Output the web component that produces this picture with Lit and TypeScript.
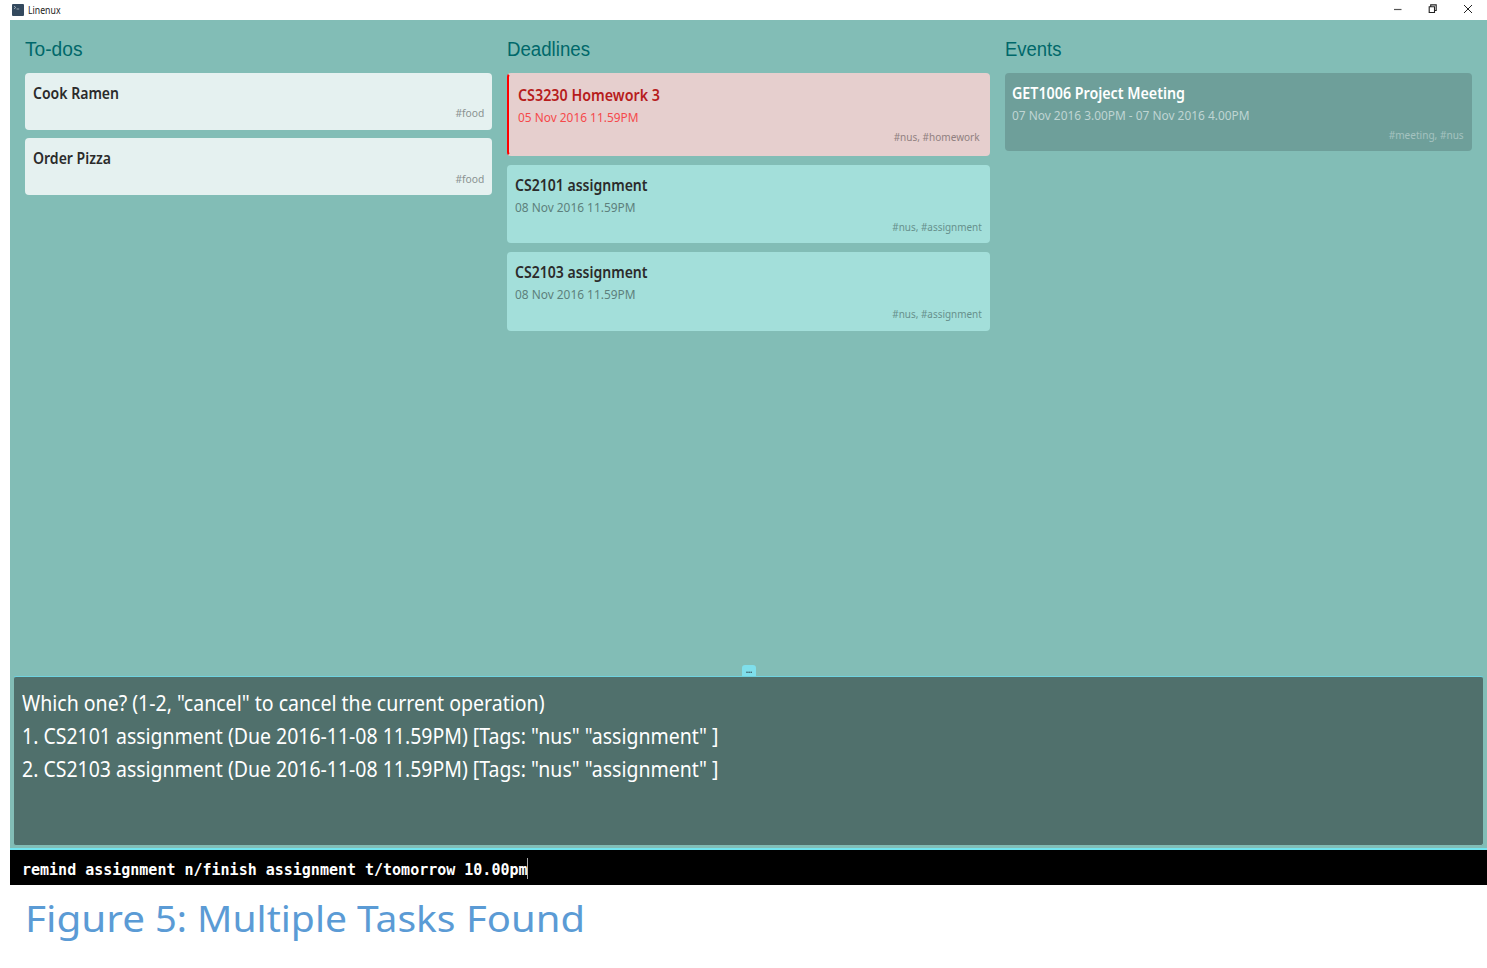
import { LitElement, html, css, nothing } from "lit";
import { customElement, property } from "lit/decorators.js";

/** One line of text condensed or expanded horizontally to a given advance width. */
@customElement("fit-text")
class FitText extends LitElement {
  @property() text = "";
  @property({ type: Number }) width = 0;
  @property({ reflect: true }) align = "left";

  static styles = css`
    :host { display: block; white-space: pre; }
    :host([align="right"]) { text-align: right; }
    .line { display: inline-block; vertical-align: top; transform-origin: 0 50%; }
    :host([align="right"]) .line { transform-origin: 100% 50%; }
  `;

  updated() {
    const line = this.renderRoot.querySelector(".line") as HTMLElement;
    const natural = parseFloat(getComputedStyle(line).width);
    if (natural) line.style.transform = `scaleX(${this.width / natural})`;
  }

  render() {
    return html`<span class="line">${this.text}</span>`;
  }
}

type Line = [text: string, width: number];
interface Task { title: Line; time?: Line; tags: Line; }

@customElement("task-card")
class TaskCard extends LitElement {
  @property({ attribute: false }) task!: Task;

  static styles = css`
    :host {
      display: block;
      box-sizing: border-box;
      padding: 9.2px 8px 8.3px 7.5px;
      border-radius: 4px;
      background: #e5f1f0;
      color: #2b2b2b;
    }
    :host(.overdue) {
      border: 2px solid transparent;
      border-left-color: #ff0000;
      padding: 9.3px 8.3px 9px 8.3px;
      background: #e6cfce;
      color: #b71c1c;
    }
    :host(.deadline) { background: #a3dfda; }
    :host(.event) { background: #6e9f9a; color: #fff; }
    .title { font-size: 15.5px; font-weight: 600; line-height: 22px; }
    .time { font-size: 13.2px; line-height: 21px; margin-top: 1px; color: #5d7f7c; }
    .tags { font-size: 11.5px; line-height: 17px; color: #8a9190; }
    :host(.overdue) .time { color: #f5494b; }
    :host(.overdue) .tags { color: #907f80; }
    :host(.deadline) .tags { color: #66908c; }
    :host(.event) .time { color: #bfd5d3; }
    :host(.event) .tags { color: #a5c3c0; }
    .title + .tags { margin-top: 0.7px; }
    .time + .tags { margin-top: 0.3px; }
  `;

  render() {
    const { title, time, tags } = this.task;
    return html`
      <fit-text class="title" .text=${title[0]} .width=${title[1]}></fit-text>
      ${time ? html`<fit-text class="time" .text=${time[0]} .width=${time[1]}></fit-text>` : nothing}
      <fit-text class="tags" align="right" .text=${tags[0]} .width=${tags[1]}></fit-text>
    `;
  }
}

interface Column { heading: Line; cards: { kind: string; task: Task }[]; }

const columns: Column[] = [
  {
    heading: ["To-dos", 57.5],
    cards: [
      { kind: "todo", task: { title: ["Cook Ramen", 86], tags: ["#food", 29] } },
      { kind: "todo", task: { title: ["Order Pizza", 78], tags: ["#food", 29] } },
    ],
  },
  {
    heading: ["Deadlines", 83],
    cards: [
      { kind: "overdue", task: { title: ["CS3230 Homework 3", 142], time: ["05 Nov 2016 11.59PM", 120.5], tags: ["#nus, #homework", 86] } },
      { kind: "deadline", task: { title: ["CS2101 assignment", 132.5], time: ["08 Nov 2016 11.59PM", 120.5], tags: ["#nus, #assignment", 89.5] } },
      { kind: "deadline", task: { title: ["CS2103 assignment", 132.5], time: ["08 Nov 2016 11.59PM", 120.5], tags: ["#nus, #assignment", 89.5] } },
    ],
  },
  {
    heading: ["Events", 56.5],
    cards: [
      { kind: "event", task: { title: ["GET1006 Project Meeting", 173], time: ["07 Nov 2016 3.00PM - 07 Nov 2016 4.00PM", 237.5], tags: ["#meeting, #nus", 75] } },
    ],
  },
];

const messages: Line[] = [
  ['Which one? (1-2, "cancel" to cancel the current operation)', 522.5],
  ['1. CS2101 assignment (Due 2016-11-08 11.59PM) [Tags: "nus" "assignment" ]', 696.5],
  ['2. CS2103 assignment (Due 2016-11-08 11.59PM) [Tags: "nus" "assignment" ]', 696.5],
];

const caption: Line[] = [["Figure", 120], ["5:", 32], ["Multiple", 150], ["Tasks", 98.5], ["Found", 119]];

@customElement("app-root")
class AppRoot extends LitElement {
  static styles = css`
    :host {
      display: block;
      box-sizing: border-box;
      height: 968px;
      padding-left: 10px;
      overflow: hidden;
      background: #fff;
      font-family: "Noto Sans", "Open Sans", sans-serif;
    }
    .titlebar { display: flex; height: 19.5px; padding-left: 2px; }
    .logo { margin-top: 3.5px; flex: none; }
    .name { flex: 1; margin-left: 3.5px; font-size: 10px; line-height: 20px; color: #222; }
    .controls { flex: none; margin-right: 14px; }
    .board {
      display: grid;
      grid-template-columns: 467px 482.5px 467px;
      column-gap: 15px;
      box-sizing: border-box;
      height: 645.5px;
      padding: 16px 0 0 15.3px;
      background: #82bdb6;
    }
    .column { display: flex; flex-direction: column; gap: 8.5px; }
    .heading {
      height: 28.5px;
      font-family: "Liberation Sans", sans-serif;
      font-size: 20px;
      line-height: 26px;
      color: #00686a;
    }
    .console { display: flex; flex-direction: column; align-items: stretch; height: 182.5px; background: #82bdb6; }
    .handle { align-self: center; width: 14px; height: 11px; border-radius: 3px 3px 0 0; background: #7fdfeb; display: block; }
    .output {
      box-sizing: border-box;
      height: 169.5px;
      margin: 0 3px 0 3px;
      padding: 8.8px 7.8px;
      border: 1px solid #82bdb6;
      border-top: 1.5px solid #6fd3e0;
      border-radius: 3px;
      background: #50706c;
      color: #fff;
      font-size: 21.8px;
      line-height: 33.3px;
    }
    .prompt {
      display: flex;
      align-items: center;
      box-sizing: border-box;
      height: 37.5px;
      border-top: 2.5px solid #72e4ee;
      padding: 3px 11.8px 0;
      background: #000;
      color: #fff;
      font-family: "DejaVu Sans Mono", monospace;
      font-size: 15px;
      font-weight: bold;
      line-height: 23px;
    }
    .command { width: 505px; padding-top: 3px; }
    .caret { width: 1px; height: 21px; background: #aaa; }
    .caption {
      display: flex;
      margin: 4.5px 0 0 15px;
      color: #5b9bd5;
      font-size: 36.5px;
      line-height: 56px;
    }
    .word { flex: none; margin-right: 10px; }
  `;

  render() {
    return html`
      <header class="titlebar">
        <svg class="logo" width="12" height="12" viewBox="0 0 12 12">
          <rect width="12" height="12" rx="1" fill="#34495e" />
          <path d="M2 2.2l1.8 1.3L2 4.8M4.6 5h2.6" fill="none" stroke="#b4c0cb" stroke-width=".8" />
        </svg>
        <fit-text class="name" .text=${"Linenux"} .width=${32.5}></fit-text>
        <svg class="controls" width="80" height="19" viewBox="1393 0 80 19" fill="none" stroke="#222">
          <path d="M1394 9.5h7.5" stroke="#555" stroke-width="1.2" />
          <path d="M1429.2 6.8h5.3v5.7h-5.3zM1430.7 6.5v-1.6h5.5v5.6h-1.6" stroke-width="1.1" />
          <path d="M1464 5l8 8M1472 5l-8 8" stroke-width="1" />
        </svg>
      </header>
      <main class="board">
        ${columns.map(({ heading, cards }) => html`
          <section class="column">
            <fit-text class="heading" .text=${heading[0]} .width=${heading[1]}></fit-text>
            ${cards.map(({ kind, task }) => html`<task-card class=${kind} .task=${task}></task-card>`)}
          </section>
        `)}
      </main>
      <section class="console">
        <svg class="handle" width="14" height="11" viewBox="0 0 14 11" fill="#3d5f68">
          <rect x="4.3" y="6.6" width="1.4" height="1.4" />
          <rect x="6.4" y="6.6" width="1.4" height="1.4" />
          <rect x="8.5" y="6.6" width="1.4" height="1.4" />
        </svg>
        <div class="output">
          ${messages.map(([text, width]) => html`<fit-text .text=${text} .width=${width}></fit-text>`)}
        </div>
      </section>
      <div class="prompt">
        <fit-text class="command" .text=${"remind assignment n/finish assignment t/tomorrow 10.00pm"} .width=${505.5}></fit-text>
        <span class="caret"></span>
      </div>
      <footer class="caption">
        ${caption.map(([text, width]) => html`<span class="word" style="width:${width}px"><fit-text .text=${text} .width=${width}></fit-text></span>`)}
      </footer>
    `;
  }
}
